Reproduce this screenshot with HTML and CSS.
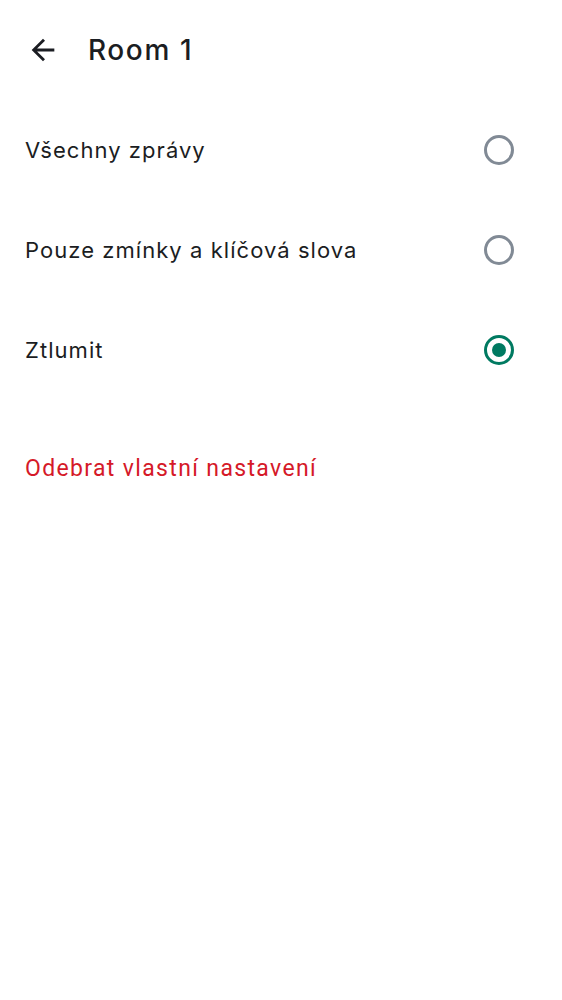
FILE: index.html
```html
<!DOCTYPE html>
<html>
<head>
<meta charset="utf-8">
<link rel="stylesheet" href="styles.css">
</head>
<body>
<div class="screen">
  <header class="topbar">
    <svg class="back" width="34" height="34" viewBox="0 0 24 24"><path d="M20 11H7.83l5.59-5.59L12 4l-8 8 8 8 1.41-1.41L7.83 13H20v-2z" fill="#1b1d22"/></svg>
    <h1 class="title">Room 1</h1>
  </header>
  <div class="options">
    <div class="option"><span class="label">Všechny zprávy</span><span class="radio"></span></div>
    <div class="option"><span class="label">Pouze zmínky a klíčová slova</span><span class="radio"></span></div>
    <div class="option"><span class="label">Ztlumit</span><span class="radio checked"></span></div>
  </div>
  <div class="remove">Odebrat vlastní nastavení</div>
</div>
</body>
</html>
```
FILE: styles.css
```css
html, body { margin: 0; padding: 0; background: #fff; }
.screen { width: 562px; height: 1000px; font-family: Inter, Roboto, sans-serif; color: #1b1d22; }
.topbar { height: 100px; display: flex; align-items: center; padding-left: 26px; gap: 28px; box-sizing: border-box; }
.back { display: block; }
.title { margin: 0; font-size: 28px; font-weight: 500; letter-spacing: 1.6px; }
.options { display: flex; flex-direction: column; }
.option { height: 100px; display: flex; align-items: center; justify-content: space-between; padding: 0 48px 0 25px; }
.label { font-size: 22px; letter-spacing: 1.05px; }
.radio { width: 30px; height: 30px; box-sizing: border-box; border: 3px solid #818a95; border-radius: 50%; display: flex; align-items: center; justify-content: center; }
.radio.checked { border-color: #007a61; }
.radio.checked::after { content: ""; width: 14px; height: 14px; border-radius: 50%; background: #007a61; }
.remove { margin-top: 49px; padding-left: 25px; height: 40px; line-height: 40px; font-family: Roboto, sans-serif; font-size: 23px; letter-spacing: 1.35px; color: #d51928; }
```
